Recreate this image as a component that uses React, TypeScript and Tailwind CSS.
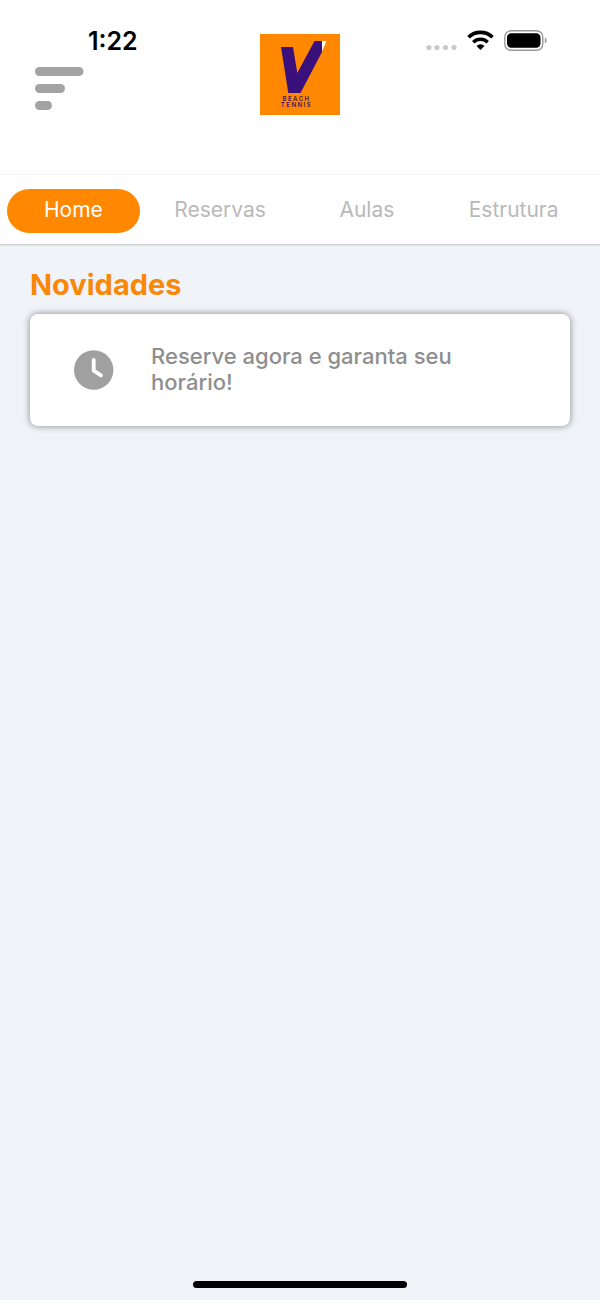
import { useState } from 'react'
import { clsx } from 'clsx'

const TABS = ['Home', 'Reservas', 'Aulas', 'Estrutura']

interface NewsItem {
  id: number
  text: string
}

const NEWS: NewsItem[] = [{ id: 1, text: 'Reserve agora e garanta seu horário!' }]

export default function App() {
  const [tab, setTab] = useState('Home')

  return (
    <div className="flex min-h-screen flex-col bg-[#f0f4f8] font-['Inter',sans-serif]">
      <Header />
      <nav className="grid grid-cols-4 gap-[14px] border-t border-b border-t-[#f3f3f3] border-b-[#cfd3d4] bg-white pt-[14px] pr-5 pb-[11px] pl-[7px] shadow-[0_1px_1px_#dfe3e6]">
        {TABS.map((t) => (
          <button
            key={t}
            onClick={() => setTab(t)}
            className={clsx(
              'h-11 rounded-full pb-[3px] text-[21px] leading-6',
              t === tab ? 'bg-[#ff8800] text-white' : 'text-[#b9b9b9]',
            )}
          >
            {t}
          </button>
        ))}
      </nav>

      <main className="flex-1 px-[30px] pt-5">
        <h1 className="text-[29px] leading-10 font-bold text-[#fb8709]">Novidades</h1>
        <div className="mt-[9px] flex flex-col gap-4">
          {NEWS.map((item) => (
            <NewsCard key={item.id} item={item} />
          ))}
        </div>
      </main>

      <footer className="flex justify-center pb-3">
        <div className="h-[7px] w-[214px] rounded-full bg-black" />
      </footer>
    </div>
  )
}

function Header() {
  return (
    <header className="grid h-[174px] grid-cols-3 bg-white">
      <div className="pt-[26px]">
        <div className="pl-[88px] text-[25px] leading-[30px] font-semibold text-black">1:22</div>
        <button aria-label="Menu" className="mt-[11px] ml-[35px] block">
          <svg width="49" height="43" viewBox="0 0 49 43" fill="#a3a3a3">
            <rect width="48.5" height="9" rx="4.5" />
            <rect y="17" width="30" height="9" rx="4.5" />
            <rect y="34" width="17" height="9" rx="4.5" />
          </svg>
        </button>
      </div>
      <div className="flex items-start justify-center pt-[34px]">
        <Logo />
      </div>
      <div className="flex items-start justify-end gap-[10px] pt-[30px] pr-[53px]">
        <SignalDots />
        <Wifi />
        <Battery />
      </div>
    </header>
  )
}

function NewsCard({ item }: { item: NewsItem }) {
  return (
    <article className="flex min-h-28 items-center rounded-lg bg-white pr-20 pl-11 shadow-[0_0_6px_1px_rgba(0,0,0,0.36)]">
      <svg width="40" height="40" viewBox="0 0 40 40" className="shrink-0">
        <circle cx="19.7" cy="20" r="19.7" fill="#a0a0a0" />
        <path
          d="M19.7 10v10.700l7.300 4.600"
          fill="none"
          stroke="#fff"
          strokeWidth="3.8"
          strokeLinecap="round"
          strokeLinejoin="round"
        />
      </svg>
      <p className="ml-[37px] pb-[2px] text-[22px] leading-[26px] font-medium text-[#8e8e8e]">{item.text}</p>
    </article>
  )
}

function Logo() {
  return (
    <svg width="80" height="81" viewBox="0 0 80 81" role="img" aria-label="V Beach Tennis">
      <rect width="80" height="81" fill="#ff8800" />
      <path d="M21 13h12l4.300 26L54.500 7H62v11L40.500 59H28.300z" fill="#39107c" />
      <path d="M62 7h4.500l-4.500 10.500z" fill="#fff" />
      <g
        fill="#3d1460"
        fontFamily="Inter, sans-serif"
        fontSize="6"
        fontWeight="600"
        letterSpacing="1.5"
        textAnchor="middle"
      >
        <text x="36.500" y="67.300">BEACH</text>
        <text x="36.500" y="73">TENNIS</text>
      </g>
    </svg>
  )
}

function SignalDots() {
  return (
    <svg width="31" height="20" viewBox="0 0 31 20" fill="#c9c9c9">
      <circle cx="3" cy="17.500" r="2.600" />
      <circle cx="11" cy="17.500" r="2.600" />
      <circle cx="19.500" cy="17.500" r="2.600" />
      <circle cx="28" cy="17.500" r="2.600" />
    </svg>
  )
}

function Wifi() {
  return (
    <svg width="27" height="20" viewBox="0 0 27 20">
      <g fill="none" stroke="#000" strokeWidth="3.600">
        <path d="M1.500 7.300a17.200 17.200 0 0 1 24 0" />
        <path d="M6.300 12.200a10.400 10.400 0 0 1 14.400 0" />
      </g>
      <path d="M13.500 20l-4-4.100a5.800 5.800 0 0 1 8 0z" />
    </svg>
  )
}

function Battery() {
  return (
    <svg width="43" height="21" viewBox="0 0 43 21">
      <rect x="0.800" y="0.800" width="38" height="19.400" rx="6.200" fill="none" stroke="#999" strokeWidth="1.400" />
      <rect x="3" y="3.300" width="33.500" height="14.400" rx="4.200" />
      <path d="M40.800 7.500c2.400 1 2.400 5 0 6z" fill="#999" />
    </svg>
  )
}
